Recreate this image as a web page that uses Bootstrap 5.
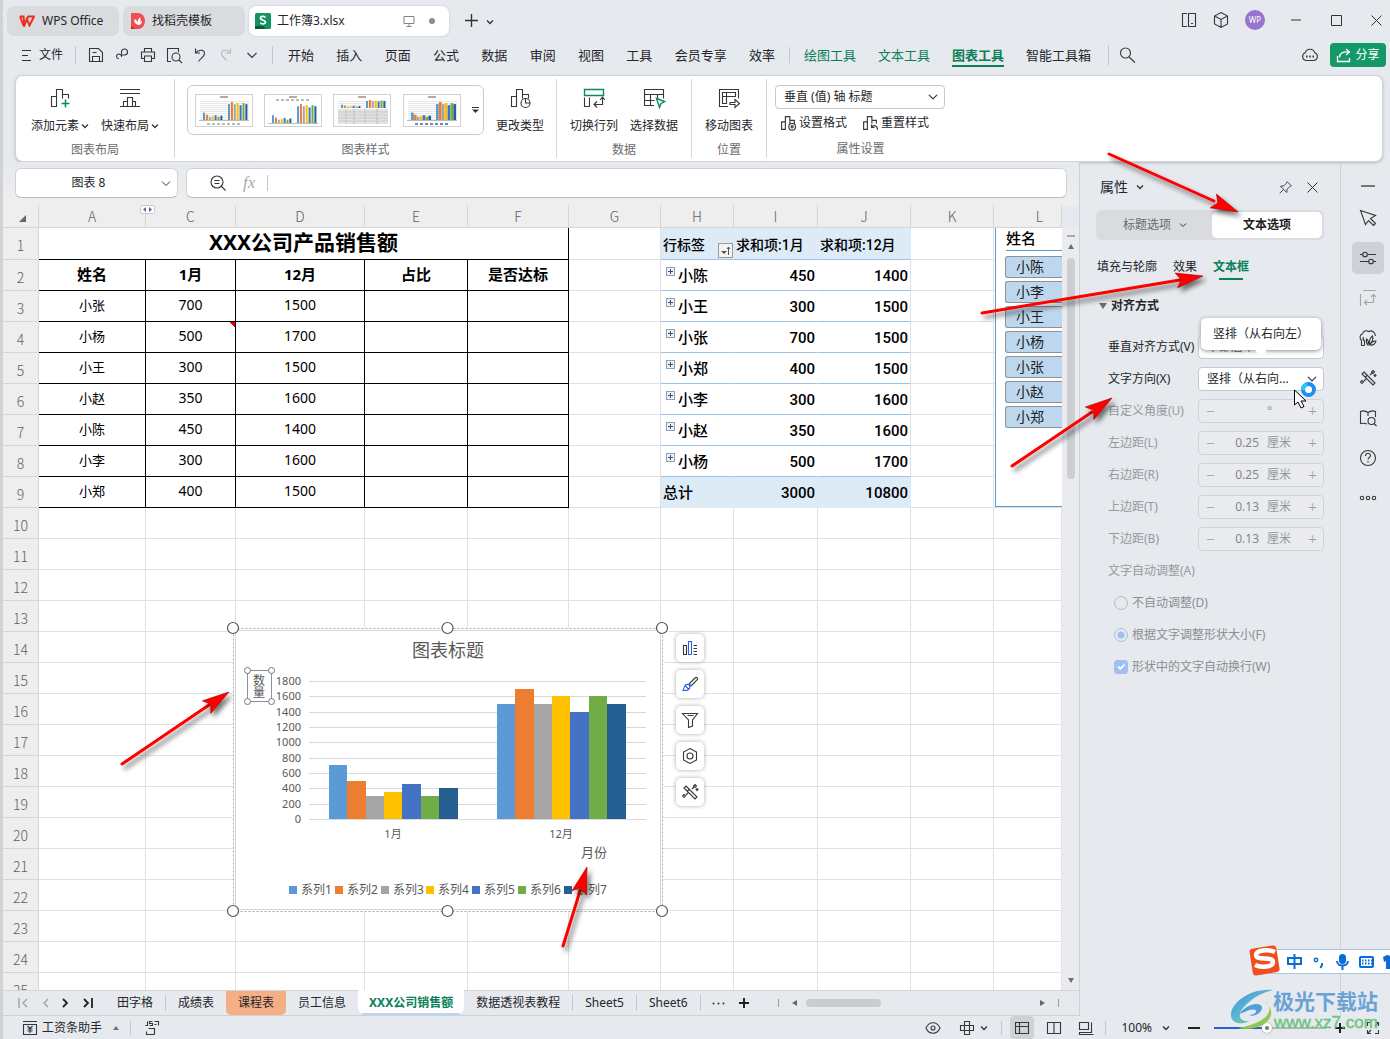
<!DOCTYPE html>
<html lang="zh-CN">
<head>
<meta charset="utf-8">
<meta name="viewport" content="width=device-width, initial-scale=1">
<title>工作簿3.xlsx - WPS Office</title>
<link href="https://cdn.jsdelivr.net/npm/bootstrap@5.3.0/dist/css/bootstrap.min.css" rel="stylesheet">
<style>
:root{--chrome:#e6e9ed;--ink:#24262b;--green:#0a7f58;--line:#d0d3d8;--gridline:#e1e1e1}
body{font-family:"Noto Sans","Noto Sans CJK SC",sans-serif;font-size:12px;line-height:18px;color:var(--ink);background:var(--chrome);height:100vh;overflow:hidden;border-left:3px solid #d2d2d4}
.desk-strip{position:absolute;left:0;top:181px;width:3px;height:40px;background:#4a4853;margin-left:-3px}
svg.ic{width:18px;height:18px;fill:none;stroke:#35373c;stroke-width:1.1;flex:none;display:block}
svg.caret{width:8px;height:8px;fill:none;stroke:#35373c;stroke-width:1.4;flex:none}
.bare{background:none;border:0;padding:0;color:inherit;font-size:12px;line-height:18px;display:flex;align-items:center;justify-content:center;flex:none}
a.bare-link{color:inherit;text-decoration:none;white-space:nowrap}
.vline{width:1px;background:#c3c6cb;flex:none}
/* title bar */
.titlebar{height:40px;padding:6px 4px 4px 4px}
.doc-tab{height:30px;border-radius:7px;background:#d9dbde;padding:0 12px;gap:7px;display:flex;align-items:center}
.doc-tab.home{width:112px}
.doc-tab.current{background:#fff;padding:0 10px 0 6px;gap:6px;box-shadow:0 0 2px #b9bcc1;width:200px}
.win-btn{width:40px}
.avatar-dot{width:20px;height:20px;border-radius:50%;background:#9575cd;color:#fff;font-size:8px}
/* menu row */
.menubar{height:34px;padding:0 4px 4px 18px}
.menubar .menus{font-size:13px}
.menus.main-set{width:487px}
.menus .ctx{color:var(--green)}
.menus .ctx.on{font-weight:700;border-bottom:2px solid var(--green);padding-bottom:1px;padding-top:3px}
.share-btn{background:#149a68;color:#fff;border-radius:4px;height:24px;width:56px;gap:4px}
/* ribbon */
.ribbon{margin:1px 7px 0 12px;height:87px;background:#fff;border-radius:8px;border:1px solid #d2d4d8;box-shadow:0 1px 3px #b5b8bd;padding:3px 0}
.rgroup{border-right:1px solid #d4d6d9;display:flex;flex-direction:column;padding-top:7px}
.rgroup:last-child{border:0}
.rgroup .items{height:52px;display:flex;justify-content:center}
.rgroup .cap{color:#6a6c70;text-align:center;margin-top:6px}
.big{display:flex;flex-direction:column;align-items:center;justify-content:space-between;height:49px}
.big svg.ic{width:24px;height:24px}
.big .lbl{display:flex;align-items:center;gap:2px;white-space:nowrap}
.gallery{width:297px;height:50px;border:1px solid #c9cbcf;border-radius:6px;padding:0 4px 0 7px;display:flex;align-items:center;justify-content:space-between;margin-top:-1px}
.gallery .thumb{width:58px;height:33px;border:1px solid #d2d2d2;background:#fff;padding:0}
.gallery .thumb svg{display:block;width:56px;height:31px}
.sel{font-size:12px;line-height:16px;color:var(--ink);height:24px;padding:2px 24px 2px 8px;border:1px solid #c6c8cc;border-radius:4px;background-color:#fff;background-size:10px;background-position:right 6px center}
.small-tool{gap:2px}
/* formula bar */
.formula-row{height:43px;padding:6px 12px 7px 12px;gap:8px;background:linear-gradient(#e6e9ed,#eee)}
.fbox{background:#fff;border:1px solid #d0d2d5;border-bottom-color:#b9bbbe;border-radius:6px;height:30px}
/* grid */
.book{min-width:0;border-right:1px solid #cfd1d5}
.sheet-area{min-height:0}
.cells{width:100%;table-layout:fixed;border-collapse:separate;border-spacing:0}
.cells td,.cells th{height:31px;padding:0;border-right:1px solid var(--gridline);border-bottom:1px solid var(--gridline);background:#fff;font-weight:400;line-height:20px;overflow:hidden;white-space:nowrap}
.cells thead th{height:23px;background:#eee;border-color:#d5d5d5;color:#5c6068;text-align:center;font-size:14px;font-family:"Noto Sans CJK SC",sans-serif;font-weight:300;line-height:18px}
.cells tbody th{background:#eee;border-color:#d5d5d5;color:#5c6068;text-align:center;font-size:14px;font-family:"Noto Sans CJK SC",sans-serif;font-weight:300;padding-top:3px}
.cells td.bk{border-color:#000;text-align:center;color:#000;font-size:13px;padding-bottom:3px}
.cells td.bk.num{font-size:14px}
.cells td.ttl{font-size:21px;font-weight:700;line-height:28px}
.cells td.hd{font-size:15px;font-weight:700;padding-bottom:2px}
.cells td.pv{border-bottom-color:#9bc2e6;border-right-color:#fff;color:#000;font:500 15px/20px Roboto,"Noto Sans CJK SC",sans-serif;padding:2px 2px 0 2px}
.cells td.pv.num{text-align:right}
.cells td.pv.band{background:#ddebf7;border-color:#ddebf7}
.cells td.pv.top{font-size:14px;border-bottom-color:#9bc2e6}
.cells td.pv.edge{border-right-color:var(--gridline)}
.cells td.note{background:linear-gradient(225deg,#e00 4px,#fff 4px)}
.expander{display:inline-block;width:9px;height:9px;border:1px solid #8f9fb8;background:linear-gradient(#3d4f74,#3d4f74) center/5px 1px no-repeat,linear-gradient(#3d4f74,#3d4f74) center/1px 5px no-repeat,#eef2f8;margin:0 3px 5px 3px}
.sort-mark{position:absolute;left:715px;top:38px;width:15px;height:15px;border:1px solid #9a9a9a;background:#f3f3f3}
.sort-mark svg,.hidden-mark svg{display:block}
.hidden-mark{position:absolute;left:137px;top:0;width:15px;height:9px;background:#fff;border:1px solid #c9ccd2;border-radius:2px}
.slicer{position:absolute;left:992px;top:23px;right:0;height:279px;background:#fff;border:1px solid #5b9bd5;border-right:0;border-top:0;padding-left:9px;color:#000}
.slicer h6{font-size:15px;line-height:20px;margin:0 0 5px 1px;padding:0 0 2px;border-bottom:1px solid #5b9bd5;font-weight:500}
.slicer button{display:block;width:100%;height:22px;margin-bottom:3px;background:#bdd7ee;border:1px solid #8d9299;border-right:0;border-radius:3px 0 0 3px;text-align:left;padding:0 0 0 10px;font-size:14px;line-height:18px;color:#222}
.chart-obj{position:absolute;left:222px;top:415px;width:445px;height:300px}
.chart-tools{position:absolute;left:673px;top:429px;gap:8px}
.chart-tools button{width:28px;height:28px;background:#fff;border-radius:5px;box-shadow:0 0 4px #aaa}
.vbar{width:17px;flex:none;background:#e9ebef;padding-top:7px}
.vbar .thumb-v{width:8px;height:221px;border-radius:4px;background:#cdced1;margin-top:9px}
/* sheet tabs */
.sheet-tabs{height:27px;border-top:1px solid #d2d4d7;border-bottom:1px solid #cfd1d5}
.stab{height:24px;line-height:24px;padding:0 12px}
.stab.peach{background:#f6af84;border-radius:0 0 5px 5px}
.stab.live{background:#fff;color:var(--green);font-weight:700;border-radius:0 0 8px 8px;box-shadow:0 -1px #fff;padding:0 11px}
.stab.live span{display:block;height:24px;border-bottom:2px solid #bcd6ef;margin:0 -7px;padding:0 7px}
.tri{width:0;height:0;border:4px solid transparent}
/* property pane */
.pane{width:261px;border-right:1px solid #cfd1d5;padding:12px 16px 0 16px;position:relative}
.seg{background:#d9dbdf;border-radius:6px;height:30px;padding:2px}
.seg button{width:110px;height:26px;color:#67696e;gap:8px;flex:1}
.seg button.on{background:#fff;border-radius:5px;color:#1b1d22;font-weight:700;flex:none}
.prow{height:32px;display:flex;align-items:center;justify-content:space-between;padding-left:12px}
.prow .ctl{width:126px}
.prow.off,.pchk{color:#96999f}
.stepper{height:24px;border:1px solid #cfd2d6;border-radius:4px;background:#e9ebee;display:flex;align-items:center}
.stepper button{width:23px;height:22px;font-size:16px;color:#9c9fa5;font-weight:300}
.stepper input{width:37px;border:0;background:none;padding:0;text-align:right;color:#85888d;font-size:12px;line-height:18px}
.stepper span{width:24px;margin:0 10px 0 8px;flex:none}
.pchk{height:32px;display:flex;align-items:center;gap:4px;padding-left:18px}
.pchk .form-check-input{width:14px;height:14px;margin:0;border-color:#b7babf;background-color:transparent;opacity:1}
.pchk .form-check-label{opacity:1!important;color:#8b8e93}
.pchk .dotted-on:checked{background-color:transparent;border-color:#9fc0f0;background-image:radial-gradient(circle,#9fc0f0 0 3px,transparent 4px)}
.pchk .tick-on:checked{background-color:#9fc0f0;border-color:#9fc0f0}
.bubble{position:absolute;left:121px;top:156px;width:120px;height:32px;line-height:32px;background:#fff;border-radius:5px;box-shadow:0 1px 4px #8b8e93;padding-left:12px}
.bubble::after{content:"";position:absolute;left:56px;top:29px;width:8px;height:8px;background:#fff;transform:rotate(45deg)}
.rail{width:49px;padding-left:5px}
.rail button{width:32px;height:32px;margin-bottom:8px;border-radius:5px}
.rail button.on{background:#cfd1d6}
.rail button.first{height:14px;margin:17px 0 9px}
/* status bar */
.status{height:23px}
.zoomer{width:112px;height:12px;appearance:none;-webkit-appearance:none;background:linear-gradient(90deg,#2b5fd0 48%,#b5b7bb 48%) center/100% 2px no-repeat}
.zoomer::-webkit-slider-thumb{-webkit-appearance:none;width:10px;height:10px;border-radius:50%;background:#777;border:3px solid #fff;box-shadow:0 0 2px #888}
.over{position:absolute;left:0;top:0;pointer-events:none}
.over text,.chart-obj text{font-family:"Noto Sans","Noto Sans CJK SC",sans-serif}
.over text.site{font-family:"Liberation Sans",sans-serif}
</style>
<script src="https://cdn.jsdelivr.net/npm/bootstrap@5.3.0/dist/js/bootstrap.bundle.min.js"></script>
</head>
<body class="d-flex flex-column position-relative">
<div class="desk-strip"></div>
<svg width="0" height="0" class="position-absolute">
  <defs>
    <symbol id="down" viewBox="0 0 8 8"><path d="M1 2.500l3 3 3-3"/></symbol>
    <symbol id="chart" viewBox="0 0 24 24"><path d="M3.500 20.500v-10h5v10zM8.500 20.500v-17h6v9M14.500 8.500h6v4"/></symbol>
    <symbol id="wand" viewBox="0 0 18 18"><path d="M5 3l11 11-2 2L3 5zM6.500 8l2-2M14 1.500l1.500 1.500L14 4.500 12.500 3zM3 11.500l1.500 1.500L3 14.500 1.500 13zM11 6l2-2M5 12l2-2M16 5.500l1 1-1 1-1-1z"/></symbol>
    <marker id="tip" viewBox="-30 -10 32 20" refX="0" refY="0" markerWidth="32" markerHeight="20" markerUnits="userSpaceOnUse" orient="auto"><path d="M0 0L-27-7.500-22 0-27 7.500z" fill="#fd0404" stroke="#a00" stroke-width=".6"/></marker>
  </defs>
</svg>

<header class="titlebar d-flex align-items-start">
  <a href="#" class="doc-tab home bare-link me-1"><svg width="16" height="12" viewBox="0 0 16 12"><path d="M1 1.500h3.500L5.500 10 9 1.500h6L10.500 10.500 7.500 2.500M1 1.500L4.500 10.500h1.500" fill="none" stroke="#e8321e" stroke-width="2"/></svg>WPS Office</a>
  <a href="#" class="doc-tab bare-link me-1 ps-2" style="width:122px"><svg width="14" height="16" viewBox="0 0 14 16"><path d="M0 0h7a7 8 0 0 1 0 16H0z" fill="#ee4f50"/><path d="M0 13l4 3H0z" fill="#b82c30"/><path d="M7 12C3 10 3 8 3.500 6 6 7 7 9 7 12zM7 12c-1-3 0-6 2-8 1 3 1 5-2 8zM7 12c1-2 2-3 4-4 0 2-1 4-4 4z" fill="#fff"/></svg>找稻壳模板</a>
  <a href="#" class="doc-tab bare-link current"><svg width="16" height="16" viewBox="0 0 16 16"><rect width="16" height="16" rx="1.500" fill="#12935f"/><path d="M0 13h8l3 3H0z" fill="#075b3c"/><path d="M10.500 4.500C9 3 5.500 3 5.500 5.200c0 2.600 5 1.400 5 3.900 0 2.200-3.800 2.200-5.200.6" fill="none" stroke="#fff" stroke-width="1.700"/></svg>工作簿3.xlsx
    <svg class="ms-auto me-1" width="12" height="12" viewBox="0 0 12 12" fill="none" stroke="#808388"><path d="M1 1.500h10v7H1zM6 8.500V11M3.500 11.500h5"/></svg><svg class="mx-1" width="6" height="6"><circle cx="3" cy="3" r="3" fill="#8a8c90"/></svg></a>
  <button class="bare ms-3 mt-2" aria-label="新建"><svg width="13" height="13" stroke="#333" stroke-width="1.400"><path d="M6.500 0v13M0 6.500h13"/></svg></button>
  <button class="bare mt-2 ms-2" aria-label="标签列表"><svg class="caret mt-1"><use href="#down"/></svg></button>
  <div class="ms-auto d-flex align-items-center" style="height:28px">
    <button class="bare" style="width:32px" aria-label="侧栏"><svg class="ic" viewBox="0 0 18 18"><path d="M7 2.500H2.500v13H7M8.500 2.500h7v13h-7zM11 12.500h2"/></svg></button>
    <button class="bare" style="width:32px" aria-label="应用"><svg class="ic" viewBox="0 0 18 18"><path d="M9 1.500l6.500 3.500v8L9 16.500 2.500 13V5zM2.500 5L9 8.500 15.500 5M9 8.500v8"/></svg></button>
    <button class="bare" style="width:36px" aria-label="账户"><span class="avatar-dot d-flex align-items-center justify-content-center">WP</span></button>
    <button class="bare win-btn" style="margin-left:3px" aria-label="最小化"><svg width="10" height="2"><path d="M0 1h10" stroke="#333"/></svg></button>
    <button class="bare win-btn" aria-label="最大化"><svg width="11" height="11"><path d="M.5.5h10v10H.5z" fill="none" stroke="#333"/></svg></button>
    <button class="bare win-btn" style="margin-right:-10px" aria-label="关闭"><svg width="11" height="11"><path d="M.5.5l10 10m0-10l-10 10" stroke="#333"/></svg></button>
  </div>
</header>

<nav class="menubar d-flex align-items-center">
  <button class="bare gap-2"><svg width="10" height="12" stroke="#333"><path d="M1 1.500h9M1 6.500h6M1 11.500h9"/></svg>文件</button>
  <span class="vline me-3 my-2" style="height:18px;margin-left:12px"></span>
  <div class="d-flex" style="gap:8px;margin-left:-5px">
    <button class="bare" aria-label="保存"><svg class="ic" viewBox="0 0 18 18"><path d="M2.500 2.500h9l4 4v9h-13zM5.500 15.500v-5h7v5M5.500 6.500h4"/></svg></button>
    <button class="bare" aria-label="输出"><svg class="ic" viewBox="0 0 18 18"><path d="M6 12.500A2.200 2.200 0 1 1 7.500 9h4a3 3 0 1 0-3-3v5"/></svg></button>
    <button class="bare" aria-label="打印"><svg class="ic" viewBox="0 0 18 18"><path d="M5.500 6V2.500h7V6M5 12.500H2.500V6h13v6.500H13M5.500 10h7v5.500h-7z"/></svg></button>
    <button class="bare" aria-label="预览"><svg class="ic" viewBox="0 0 18 18"><path d="M6 15.500H2.500v-13h11V6"/><circle cx="11" cy="11" r="4"/><path d="M14 14l3 3"/></svg></button>
    <button class="bare" aria-label="撤销"><svg class="ic" viewBox="0 0 18 18" stroke-width="1.500"><path d="M4.500 2.500v4.500H9M4.500 7c3-4 9-3.500 9 .5 0 3-3 4-6 8"/></svg></button>
    <button class="bare" aria-label="恢复" disabled><svg class="ic" viewBox="0 0 18 18" style="stroke:#b4b7bb"><path d="M13.500 2.500v4.500H9M13.500 7c-3-4-9-3.500-9 .5 0 3 3 4 5 7"/></svg></button>
    <button class="bare" aria-label="更多"><svg class="ic" viewBox="0 0 18 18"><path d="M4.500 7L9 11.500 13.500 7"/></svg></button>
  </div>
  <span class="vline" style="height:18px;margin:0 15px 0 11px"></span>
  <div class="menus main-set d-flex justify-content-between">
    <a href="#" class="bare-link">开始</a><a href="#" class="bare-link">插入</a><a href="#" class="bare-link">页面</a><a href="#" class="bare-link">公式</a><a href="#" class="bare-link">数据</a><a href="#" class="bare-link">审阅</a><a href="#" class="bare-link">视图</a><a href="#" class="bare-link">工具</a><a href="#" class="bare-link">会员专享</a><a href="#" class="bare-link">效率</a>
  </div>
  <span class="vline" style="height:16px;margin:0 14px"></span>
  <div class="menus d-flex align-items-center" style="gap:22px">
    <a href="#" class="bare-link ctx">绘图工具</a><a href="#" class="bare-link ctx">文本工具</a><a href="#" class="bare-link ctx on">图表工具</a><a href="#" class="bare-link">智能工具箱</a>
  </div>
  <span class="vline" style="height:20px;margin:0 9px 0 17px"></span>
  <button class="bare" aria-label="搜索"><svg class="ic" viewBox="0 0 18 18"><circle cx="7.500" cy="7" r="5"/><path d="M11 11l6 5.500"/></svg></button>
  <button class="bare ms-auto" style="margin-right:11px" aria-label="云"><svg class="ic" viewBox="0 0 18 18"><path d="M5 14.500a4 4 0 0 1-.8-7.700 5 5 0 0 1 9.600 0A4 4 0 0 1 13 14.500z"/><path d="M5 10.500h1.500M8.300 10.500h1.500M11.500 10.500H13" stroke-width="1.800"/></svg></button>
  <button class="bare share-btn"><svg width="15" height="15" viewBox="0 0 15 15" fill="none" stroke="#fff" stroke-width="1.300"><path d="M1.500 8v5.500h12V10M3.500 9.500c0-4 3-6 9.500-5.500M10 1l3.500 3L10 7"/></svg>分享</button>
</nav>

<section class="ribbon d-flex">
  <div class="rgroup" style="width:159px">
    <div class="items" style="gap:12px">
      <button class="bare big"><svg class="ic" viewBox="0 0 24 24"><use href="#chart"/><path d="M17.500 13.500v8M13.500 17.500h8" stroke="#0a8a5c" stroke-width="1.500"/></svg><span class="lbl">添加元素<svg class="caret"><use href="#down"/></svg></span></button>
      <button class="bare big"><svg class="ic" viewBox="0 0 24 24"><path d="M2 3.500h20M2 7.500h20M2 20.500h20M5.500 20.500v-5h4v5M9.500 20.500v-9h5v9M14.500 20.500v-5h3v5"/></svg><span class="lbl">快速布局<svg class="caret"><use href="#down"/></svg></span></button>
    </div>
    <div class="cap">图表布局</div>
  </div>
  <div class="rgroup" style="width:382px">
    <div class="items" style="gap:12px">
      <div class="gallery" id="gallery"></div>
      <button class="bare big"><svg class="ic" viewBox="0 0 24 24"><use href="#chart"/><circle cx="17.500" cy="17" r="4.500" fill="#fff"/><path d="M17.500 12.500V17H22"/></svg><span class="lbl">更改类型</span></button>
    </div>
    <div class="cap">图表样式</div>
  </div>
  <div class="rgroup" style="width:135px">
    <div class="items" style="gap:12px">
      <button class="bare big"><svg class="ic" viewBox="0 0 24 24"><path d="M2.500 3.500h19v6h-19z" stroke="#0a8a5c" stroke-width="1.400"/><path d="M2.500 11.500v9h5v-9M12.500 18.500h8v-7M15 15.500l-3 3 3 3M18 14l2.500-3 2.500 3"/></svg><span class="lbl">切换行列</span></button>
      <button class="bare big"><svg class="ic" viewBox="0 0 24 24"><path d="M12 19.500H2.500v-16h19v9M2.500 8.500h19M2.500 14.500h10M8.500 8.500v11M15.500 8.500v4"/><path d="M14.500 12.500l8 3-3.500 2-1.500 4z" stroke="#0a8a5c" stroke-width="1.400"/></svg><span class="lbl">选择数据</span></button>
    </div>
    <div class="cap">数据</div>
  </div>
  <div class="rgroup" style="width:75px">
    <div class="items">
      <button class="bare big"><svg class="ic" viewBox="0 0 24 24"><path d="M11 20.500H2.500v-17h19v9M5.500 17.500v-11h13v4h-9v7zM9.500 6.500v4h-4M13 16.500h5v-3l4.500 4-4.500 4v-3h-5z"/></svg><span class="lbl">移动图表</span></button>
    </div>
    <div class="cap">位置</div>
  </div>
  <div class="rgroup" style="width:187px">
    <div class="items flex-column justify-content-between px-2">
      <select class="form-select sel" style="width:170px;margin-top:-1px" aria-label="图表元素"><option>垂直 (值) 轴 标题</option></select>
      <div class="d-flex ps-1" style="gap:14px;padding-bottom:2px">
        <button class="bare small-tool"><svg class="ic" viewBox="0 0 24 24" style="stroke-width:1.500"><use href="#chart"/><circle cx="17.500" cy="17" r="4.500" fill="#fff"/><circle cx="17.500" cy="17" r="1.500"/></svg>设置格式</button>
        <button class="bare small-tool"><svg class="ic" viewBox="0 0 24 24" style="stroke-width:1.500"><use href="#chart"/><path d="M14 14v4h4M14 18c2-4 8-3 8 3"/></svg>重置样式</button>
      </div>
    </div>
    <div class="cap">属性设置</div>
  </div>
</section>

<main class="d-flex flex-grow-1" style="min-height:0">
  <div class="book d-flex flex-column flex-grow-1">
    <div class="formula-row d-flex">
      <div class="fbox d-flex align-items-center justify-content-center position-relative flex-shrink-0" style="width:163px"><span class="pe-3">图表 8</span><svg class="ic position-absolute end-0" style="margin-right:2px;stroke-width:1" viewBox="0 0 18 18"><path d="M5 7.500L9 11.500 13 7.500"/></svg></div>
      <div class="fbox d-flex align-items-center flex-grow-1" style="padding-left:22px">
        <svg class="ic" viewBox="0 0 18 18"><circle cx="8" cy="8" r="6"/><path d="M12 12l4.500 4.500M5.500 6.500h5M5.500 9.500h5"/></svg>
        <i class="ms-3 me-2" style="font:italic 17px/18px 'Liberation Serif',serif;color:#a7a9ad">fx</i><span class="vline ms-1" style="height:16px"></span>
        <input class="border-0 bg-transparent flex-grow-1" style="outline:0" aria-label="编辑栏">
      </div>
    </div>
    <div class="sheet-area d-flex flex-grow-1">
      <div class="flex-grow-1 position-relative overflow-hidden bg-white" style="min-width:0">
        <table class="cells"><colgroup><col style="width:36px"><col style="width:107px"><col style="width:90px"><col style="width:129px"><col style="width:103px"><col style="width:101px"><col style="width:92px"><col style="width:73px"><col style="width:84px"><col style="width:93px"><col style="width:83px"><col></colgroup>
          <thead><tr><th><svg width="7" height="7" class="ms-1"><path d="M7 0v7H0z" fill="#666"/></svg></th><th>A</th><th>C</th><th>D</th><th>E</th><th>F</th><th>G</th><th>H</th><th>I</th><th>J</th><th>K</th><th class="ps-4">L</th></tr></thead>
          <tbody id="rows"></tbody>
        </table>
        <span class="hidden-mark"><svg width="13" height="7"><path d="M5 1v5L2 3.500zM8 1v5l3-2.500z" fill="#5c6b8c"/></svg></span>
        <span class="sort-mark"><svg width="13" height="13"><path d="M2 7h6L5 10z" fill="#555"/><path d="M9.500 11V3M8 5l1.500-2L11 5" fill="none" stroke="#555"/></svg></span>
        <div class="slicer"><h6>姓名</h6><button>小陈</button><button>小李</button><button>小王</button><button>小杨</button><button>小张</button><button>小赵</button><button>小郑</button></div>
        <svg class="chart-obj" id="chartObj" viewBox="225 620 445 300"></svg>
        <div class="chart-tools d-flex flex-column">
          <button class="bare" aria-label="图表元素"><svg class="ic" viewBox="0 0 18 18"><path d="M2.500 6.500h3v9h-3z"/><path d="M7.500 2.500h3v13h-3z" stroke="#2f5fe0"/><path d="M12.500 6.500H16M12.500 9.500H16M12.500 12.500H16M12.500 15.500H16"/></svg></button>
          <button class="bare" aria-label="图表样式"><svg class="ic" viewBox="0 0 18 18"><path d="M8 9l6.500-6.500a1.500 1.500 0 0 1 2 2L10 11"/><path d="M1.500 15.500c2-1 1-3 2.500-5 2-2 4-1 4.500 0s1 2.500-1 4-4.500 1-6 1zM4 10.500l4 4M8 9l2.500 2" stroke="#2f5fe0"/></svg></button>
          <button class="bare" aria-label="筛选"><svg class="ic" viewBox="0 0 18 18"><path d="M1.500 2.500h15L11.500 9v6l-4 1.500V9zM6.500 4.500h6"/></svg></button>
          <button class="bare" aria-label="设置"><svg class="ic" viewBox="0 0 18 18"><path d="M9 1.500L15.500 5v8L9 16.500 2.500 13V5z"/><circle cx="9" cy="9" r="3"/></svg></button>
          <button class="bare" aria-label="美化"><svg class="ic"><use href="#wand"/></svg></button>
        </div>
      </div>
      <div class="vbar d-flex flex-column align-items-center" style="margin-top:23px"><span style="width:8px;height:2px;background:#aaa"></span><span class="tri" style="border-width:3px;border-bottom:5px solid #6c6e72;margin-top:4px"></span><span class="thumb-v"></span><span class="tri mt-auto mb-1" style="border-width:3px;border-top:5px solid #6c6e72"></span></div>
    </div>
    <div class="sheet-tabs d-flex">
      <div class="d-flex align-items-center justify-content-between" style="width:75px;margin:0 12px 0 15px">
        <svg width="10" height="10" fill="none" stroke="#a0a2a6" stroke-width="1.400"><path d="M1 0v10M9 1L5 5l4 4"/></svg><svg width="7" height="10" fill="none" stroke="#a0a2a6" stroke-width="1.400"><path d="M6 1L2 5l4 4"/></svg><svg width="7" height="10" fill="none" stroke="#222" stroke-width="1.800"><path d="M1 1l4 4-4 4"/></svg><svg width="10" height="10" fill="none" stroke="#222" stroke-width="1.800"><path d="M1 1l4 4-4 4M9 0v10"/></svg>
      </div>
      <a href="#" class="stab bare-link">田字格</a><span class="vline my-1"></span><a href="#" class="stab bare-link pe-2">成绩表</a><a href="#" class="stab bare-link peach ms-1">课程表</a><a href="#" class="stab bare-link">员工信息</a><a href="#" class="stab bare-link live"><span>XXX公司销售额</span></a><a href="#" class="stab bare-link">数据透视表教程</a><span class="vline my-1"></span><a href="#" class="stab bare-link">Sheet5</a><span class="vline my-1"></span><a href="#" class="stab bare-link">Sheet6</a><span class="vline my-1"></span>
      <button class="bare" style="width:35px" aria-label="更多工作表"><svg width="13" height="3" fill="#333"><circle cx="1.500" cy="1.500" r="1"/><circle cx="6.500" cy="1.500" r="1"/><circle cx="11.500" cy="1.500" r="1"/></svg></button>
      <button class="bare" style="width:16px" aria-label="新建工作表"><svg width="10" height="10" stroke="#222" stroke-width="2"><path d="M5 0v10M0 5h10"/></svg></button>
      <div class="d-flex align-items-center flex-grow-1" style="padding:0 20px 0 26px"><span class="vline" style="height:8px;background:#999"></span><span class="tri" style="border-width:3px;border-right:5px solid #666;margin:0 9px 0 10px"></span><span style="width:75px;height:8px;border-radius:4px;background:#cbccd0"></span><span class="tri ms-auto" style="border-width:3px;border-left:5px solid #666"></span><span class="vline" style="height:8px;background:#999;margin-left:10px"></span></div>
    </div>
  </div>

  <aside class="pane flex-shrink-0">
    <div class="d-flex align-items-center ps-1" style="height:26px"><span style="font-size:14px">属性</span><svg class="caret ms-2"><use href="#down"/></svg>
      <button class="bare ms-auto" aria-label="固定"><svg class="ic" style="width:15px;height:15px" viewBox="0 0 18 18"><path d="M11 2l5 5-2 1-3 3-.5 4L3 7.500l4-.5 3-3zM6.500 11.500L2 16"/></svg></button><button class="bare" style="margin:0 6px 0 14px" aria-label="关闭窗格"><svg width="11" height="11"><path d="M.5.5l10 10m0-10l-10 10" stroke="#333"/></svg></button></div>
    <div class="seg d-flex" style="margin-top:10px"><button class="bare">标题选项<svg class="caret" style="stroke-width:1"><use href="#down"/></svg></button><button class="bare on">文本选项</button></div>
    <div class="d-flex" style="gap:16px;margin:18px 0 0 1px;height:32px"><a href="#" class="bare-link">填充与轮廓</a><a href="#" class="bare-link">效果</a><a href="#" class="bare-link fw-bold text-center" style="color:var(--green)">文本框<span class="d-block mx-auto" style="width:24px;height:2px;background:var(--green);margin-top:2px"></span></a></div>
    <div class="fw-bold d-flex align-items-center gap-1" style="height:26px;padding:6px 0 0 3px;margin-bottom:15px"><span class="tri" style="border-top:6px solid #6a6c70;border-bottom:0"></span>对齐方式</div>
    <div class="prow"><label for="va" class="text-nowrap">垂直对齐方式(V)</label><select id="va" class="form-select sel ctl flex-shrink-0"><option>中部居中</option></select></div>
    <div class="prow"><label for="dir">文字方向(X)</label><select id="dir" class="form-select sel ctl"><option>竖排（从右向...</option></select></div>
    <div id="steps"></div>
    <div class="prow off">文字自动调整(A)</div>
    <div class="pchk"><input class="form-check-input" type="radio" name="fit" id="f1" disabled><label class="form-check-label" for="f1">不自动调整(D)</label></div>
    <div class="pchk"><input class="form-check-input dotted-on" type="radio" name="fit" id="f2" checked disabled><label class="form-check-label" for="f2">根据文字调整形状大小(F)</label></div>
    <div class="pchk"><input class="form-check-input tick-on" type="checkbox" id="f3" checked disabled><label class="form-check-label" for="f3">形状中的文字自动换行(W)</label></div>
    <div class="bubble">竖排（从右向左）</div>
  </aside>
  <aside class="rail flex-shrink-0 d-flex flex-column align-items-center">
    <button class="bare first" aria-label="收起"><svg width="14" height="2"><path d="M0 1h14" stroke="#777" stroke-width="2"/></svg></button>
    <button class="bare" aria-label="选择"><svg class="ic" viewBox="0 0 18 18"><path d="M1.500 1.500l15 5-5 3 5 5-2 2-5-5-3 4z"/></svg></button>
    <button class="bare on" aria-label="属性"><svg class="ic" viewBox="0 0 18 18"><path d="M1 5.500h3M8.500 5.500H17M1 12.500h8.500M14 12.500h3"/><circle cx="6" cy="5.500" r="2.300"/><circle cx="12" cy="12.500" r="2.300"/></svg></button>
    <button class="bare" aria-label="转置"><svg class="ic" viewBox="0 0 18 18" style="stroke:#a3a6aa"><path d="M1.500 5v12M4 1.500h13M5.500 13.500h9v-8M8 11l-2.500 2.500L8 16M12 8l2.500-2.500L17 8"/></svg></button>
    <button class="bare" aria-label="稻壳"><svg class="ic" viewBox="0 0 18 18"><path d="M5.500 16.500h-3v-5C0 9.500 1 5 3.500 5 4 2 7.500 1 9.500 2.500c3-1.500 6.500 0 7 4.500M5.500 16.500V12c-1.500-1-1.500-3-1-4M9 16c-2-2-2-4-1.500-6 1.500 1 2.500 3 1.500 6zM10.500 15c-.5-3 .5-6 3-8 1 3 0 6-3 8zM11 16c1-2.500 3-4 6-4-.5 3-3 4.500-6 4z"/></svg></button>
    <button class="bare" aria-label="美化"><svg class="ic"><use href="#wand"/></svg></button>
    <button class="bare" aria-label="查找"><svg class="ic" viewBox="0 0 18 18"><path d="M16.500 8V2.500C14 1.500 11 2 9 3.500 7 2 4 1.500 1.500 2.500v12C4 14 6 14 8 15M9 3.500V7"/><circle cx="12.500" cy="12" r="3.500"/><path d="M15 14.500l2.500 2.500"/></svg></button>
    <button class="bare" aria-label="帮助"><svg class="ic" viewBox="0 0 18 18"><circle cx="9" cy="9" r="7.500"/><path d="M6.500 7c0-3.500 5-3.500 5-.5 0 2-2.500 2-2.500 4M9 12v1.500"/></svg></button>
    <button class="bare" aria-label="更多"><svg class="ic" viewBox="0 0 18 18"><circle cx="3" cy="9" r="1.700"/><circle cx="9" cy="9" r="1.700"/><circle cx="15" cy="9" r="1.700"/></svg></button>
  </aside>
</main>

<footer class="status d-flex align-items-center">
  <button class="bare" style="margin-left:18px;gap:3px"><svg class="ic" viewBox="0 0 18 18"><path d="M2 2.500h14M2.500 5.500h13v10h-13zM6.500 7L9 9.500 11.500 7M9 9.500V14M6.500 10h5M6.500 12h5"/></svg>工资条助手<span class="tri ms-2" style="border-width:3px;border-top:0;border-bottom:4px solid #68748f"></span></button>
  <span class="vline" style="height:14px;margin:0 12px 0 11px"></span>
  <button class="bare" aria-label="JS 宏"><svg class="ic" viewBox="0 0 18 18"><path d="M4.500 2.500v4h-2M9.500 2.500h-3v2h3v2h-3M11.500 2.500h4v4M11.500 5.500h2M5.500 9.500h6v6M3.500 12.500v3h8"/></svg></button>
  <div class="ms-auto d-flex align-items-center h-100">
    <svg class="ic" viewBox="0 0 18 18"><path d="M2 9c3-7 11-7 14 0-3 7-11 7-14 0z"/><circle cx="9" cy="9" r="2"/></svg>
    <svg class="ic ms-3" viewBox="0 0 18 18"><path d="M6.500 2.500h5v4h-5zM6.500 11.500h5v4h-5zM2.500 6.500h4v5h-4zM11.500 6.500h4v5h-4z"/></svg><svg class="caret ms-1"><use href="#down"/></svg>
    <span class="vline" style="height:14px;margin:0 8px 0 13px"></span>
    <button class="bare h-100 rounded-1" style="width:24px;background:#cfd1d5" aria-label="普通视图"><svg class="ic" viewBox="0 0 18 18"><path d="M2.500 3.500h13v11h-13zM2.500 7.500h13M6.500 3.500v11"/></svg></button>
    <button class="bare" style="width:40px" aria-label="分页预览"><svg class="ic" viewBox="0 0 18 18"><path d="M2.500 3.500h13v11h-13zM9 3.500v11"/></svg></button>
    <button class="bare" style="width:24px" aria-label="页面布局"><svg class="ic" viewBox="0 0 18 18"><path d="M2.500 3.500h9v7h-9zM14.500 3.500v10h-12v2h14"/></svg></button>
    <span class="vline" style="height:14px;margin:0 15px 0 7px"></span>
    <span>100%</span><svg class="caret" style="margin-left:10px"><use href="#down"/></svg>
    <button class="bare" style="margin:0 14px 0 18px" aria-label="缩小"><svg width="12" height="2"><path d="M0 1h12" stroke="#222" stroke-width="2"/></svg></button>
    <input type="range" class="zoomer" min="0" max="100" value="47" aria-label="缩放">
    <button class="bare" style="margin:0 19px 0 9px" aria-label="放大"><svg width="10" height="10" stroke="#222" stroke-width="2"><path d="M5 0v10M0 5h10"/></svg></button>
    <svg class="ic me-2" viewBox="0 0 18 18"><path d="M6 3.500H3.500V7M11.500 3.500h3V7M11 7l3.500-3.500M3.500 11v3.500H7M3.500 14.500L7 11M14.500 11v3.500H11"/></svg>
  </div>
</footer>

<svg class="over" width="1387" height="1039" viewBox="3 0 1387 1039">
  <defs>
    <filter id="sh" x="-20%" y="-60%" width="140%" height="220%"><feDropShadow dx="3" dy="4" stdDeviation="2.500" flood-opacity=".55"/></filter>
    <linearGradient id="swirl" x1="0" y1="0" x2="1" y2="1"><stop offset="0" stop-color="#3d8fdd"/><stop offset=".5" stop-color="#5fb9cf"/><stop offset="1" stop-color="#9ccb4f"/></linearGradient>
  </defs>
  <g filter="url(#sh)" stroke="#fd0404" stroke-width="3" stroke-linecap="round">
    <path d="M1109 154L1214 201"/><path d="M982 313L1180 280"/><path d="M1012 466L1092 412"/><path d="M122 764L209 705"/><path d="M563 946L580 891"/>
  </g>
  <g filter="url(#sh)" stroke="transparent" fill="none">
    <path d="M1109 154L1238 212" marker-end="url(#tip)"/><path d="M982 313L1203 276" marker-end="url(#tip)"/><path d="M1012 466L1112 398" marker-end="url(#tip)"/><path d="M122 764L229 692" marker-end="url(#tip)"/><path d="M563 946L587 867" marker-end="url(#tip)"/>
  </g>
  <path d="M1294.500 390v15l3.500-3 3 6 3-1.500-3-5.500h5z" fill="#fff" stroke="#000"/>
  <circle cx="1308.500" cy="389.500" r="5.500" fill="#fff" stroke="#1e8ff0" stroke-width="4"/>
  <path d="M1303 390a5.500 5.500 0 0 1 4-5.500" fill="none" stroke="#35c3f5" stroke-width="4"/>
  <path d="M1270 949.500h121v24h-121z" fill="#fff" stroke="#a9c6e4"/>
  <rect x="1251" y="947" width="27" height="27" rx="3" fill="#f04e1c" transform="rotate(-9 1264 960)"/>
  <path d="M1275 952c-6-3-19-2-19 3 0 6 17 1 17 7 0 5-12 6-18 3" fill="none" stroke="#fff" stroke-width="4.500"/>
  <g fill="none" stroke="#0a6cd6" stroke-width="2"><path d="M1288 958h13v6h-13zM1294.500 954v15"/><circle cx="1316" cy="960" r="1.700" stroke-width="1.500"/><path d="M1322 963v2l-1.500 3"/><rect x="1340" y="955" width="5" height="8" rx="2.500" fill="#0a6cd6"/><path d="M1337 961c0 6 11 6 11 0M1342.500 966v4"/><rect x="1360" y="957" width="13" height="10" rx="1"/><path d="M1362 960.500h10M1362 963.500h10" stroke-dasharray="1.500 1.500"/></g>
  <path d="M1383 957l4-2 4 1v13h-5v-8l-2 1z" fill="#0a6cd6"/>
  <path d="M1262 1000c13 4 12 22-24 28 14 3 30-2 33-13 1-6-2-12-9-15z" fill="#93c850"/>
  <path d="M1273 990c-24-2-43 14-42 26 1 8 11 9 18 5-10 1-12-7-5-14 7-8 17-14 29-17z" fill="url(#swirl)"/>
  <path d="M1240 1014c3-8 20-14 22-7 1 5-8 11-13 8 6 0 9-4 6-5-4-2-12 3-15 4z" fill="#4f9fd8"/>
  <text x="1273" y="1009" font-size="21" font-weight="700" fill="#6aa2d6">极光下载站</text>
  <text class="site" x="1274" y="1028" font-size="17" fill="#6cc47f" stroke="#6cc47f" stroke-width=".4">www.xz7.com</text>
</svg>

<script>
const colors = ['#5b9bd5','#ed7d31','#a5a5a5','#ffc000','#4472c4','#70ad47','#255e91'];
const jan = [700,500,300,350,450,300,400], dec = [1500,1700,1500,1600,1400,1600,1500];

// worksheet rows: left table, then pivot table
const left = [['小张',700,1500],['小杨',500,1700],['小王',300,1500],['小赵',350,1600],['小陈',450,1400],['小李',300,1600],['小郑',400,1500]];
const pivot = [['小陈',450,1400],['小王',300,1500],['小张',700,1500],['小郑',400,1500],['小李',300,1600],['小赵',350,1600],['小杨',500,1700]];
let html = '';
for (let r = 1; r <= 25; r++) {
  html += `<tr><th>${r}</th>`;
  if (r === 1) html += '<td class="bk ttl" colspan="5">XXX公司产品销售额</td>';
  else if (r === 2) html += ['姓名','1月','12月','占比','是否达标'].map(t => `<td class="bk hd">${t}</td>`).join('');
  else if (r <= 9) { const d = left[r-3]; html += `<td class="bk">${d[0]}</td><td class="bk num${r===4?' note':''}">${d[1]}</td><td class="bk num">${d[2]}</td><td class="bk"></td><td class="bk"></td>`; }
  else html += '<td></td>'.repeat(5);
  html += '<td></td>';
  if (r === 1) html += '<td class="pv band top">行标签</td><td class="pv band top">求和项:1月</td><td class="pv band top">求和项:12月</td>';
  else if (r <= 8) { const p = pivot[r-2]; html += `<td class="pv"><span class="expander"></span>${p[0]}</td><td class="pv num">${p[1]}</td><td class="pv num edge">${p[2]}</td>`; }
  else if (r === 9) html += '<td class="pv band">总计</td><td class="pv band num">3000</td><td class="pv band num">10800</td>';
  else html += '<td></td>'.repeat(3);
  html += '<td></td><td></td></tr>';
}
document.getElementById('rows').innerHTML = html;

// chart object
let c = '<rect x="233.500" y="628.500" width="429" height="283" fill="#fff" stroke="#aaa" stroke-dasharray="2 2"/><rect x="235.500" y="630.500" width="425" height="279" fill="#fff" stroke="#d9d9d9"/>';
c += '<text x="448" y="657" font-size="18" text-anchor="middle" fill="#595959">图表标题</text><g font-size="11" fill="#595959">';
for (let i = 0; i <= 9; i++) {
  const y = Math.round(819 - i * 138 / 9);
  c += `<path d="M309 ${y}.500H646" stroke="#d9d9d9"/><text x="301" y="${y+4}" text-anchor="end">${i*200}</text>`;
}
[[329,jan],[497,dec]].forEach(([x0, v]) => v.forEach((n, i) => {
  const a = Math.round(x0 + i * 128.5 / 7), b = Math.round(x0 + (i + 1) * 128.5 / 7), h = Math.round(n * 138 / 1800);
  c += `<rect x="${a}" y="${819-h}" width="${b-a}" height="${h}" fill="${colors[i]}"/>`;
}));
c += '<text x="393" y="838" text-anchor="middle">1月</text><text x="561" y="838" text-anchor="middle">12月</text><text x="581" y="857" font-size="13">月份</text></g><g font-size="12" fill="#595959">';
colors.forEach((k, i) => { const x = Math.round(289 + i * 45.8); c += `<rect x="${x}" y="886" width="8" height="8" fill="${k}"/><text x="${x+12}" y="894">系列${i+1}</text>`; });
c += '<text x="253" y="685">数</text><text x="253" y="697">量</text></g><rect x="247.500" y="670.500" width="24" height="31" fill="none" stroke="#8d8f99"/>';
[[247.5,670.5],[271.5,670.5],[247.5,701.5],[271.5,701.5]].forEach(p => c += `<circle cx="${p[0]}" cy="${p[1]}" r="3" fill="#fff" stroke="#777"/>`);
[233,447.5,662].forEach(x => [628,911].forEach(y => c += `<circle cx="${x}" cy="${y}" r="5.500" fill="#fff" stroke="#555" stroke-width="1.200"/>`));
document.getElementById('chartObj').innerHTML = c;

// style gallery thumbnails
let g = '';
for (let k = 0; k < 4; k++) {
  const base = k === 2 ? 13 : k === 1 ? 28 : 25, f = k === 2 ? 8 : k === 1 ? 19 : 18, w = k === 3 ? 2.7 : 2;
  let s = '<path d="M24 2h8" stroke="#a88" stroke-width="1.500"/>';
  if (k !== 1) for (let y = 6; y <= base; y += 2) s += `<path d="M4 ${y}.500h49" stroke="#ddd" stroke-width=".7"/>`;
  [[7,jan],[32,dec]].forEach(([x0, v]) => v.forEach((n, i) => { const h = n / 1700 * f; s += `<rect x="${x0+i*2.9}" y="${base-h}" width="${w}" height="${h}" fill="${colors[i]}"/>`; }));
  if (k === 2) s += '<path d="M4 14h50v15H4z" fill="#e3e3e3"/><path d="M4 17h50M4 20h50M4 23h50M4 26h50M12 14v15M31 14v15" stroke="#bbb" stroke-width=".6"/><path d="M20 14v15M43 14v15" stroke="#a9b" stroke-dasharray="1 1"/>';
  else s += `<path d="M11 ${k===1?5:29}h34" stroke="${k===3?'#468':'#9ab08a'}" stroke-dasharray="3 2" stroke-width="1.300"/><path d="M3 ${base}.500h50" stroke="#bbb"/>`;
  g += `<button class="thumb" aria-label="样式${k+1}"><svg viewBox="0 0 56 31">${s}</svg></button>`;
}
g += '<svg width="7" height="6"><path d="M0 .5h7" stroke="#333"/><path d="M0 2.500h7L3.500 6z" fill="#333"/></svg>';
document.getElementById('gallery').innerHTML = g;

// spacing steppers of the pane
document.getElementById('steps').innerHTML = [['自定义角度(U)','','°'],['左边距(L)','0.25','厘米'],['右边距(R)','0.25','厘米'],['上边距(T)','0.13','厘米'],['下边距(B)','0.13','厘米']].map((s, i) =>
 `<div class="prow off"><label for="st${i}">${s[0]}</label><div class="stepper ctl"><button class="bare" disabled>−</button><input id="st${i}" value="${s[1]}" disabled><span>${s[2]}</span><button class="bare" disabled>+</button></div></div>`).join('');
</script>
</body>
</html>
